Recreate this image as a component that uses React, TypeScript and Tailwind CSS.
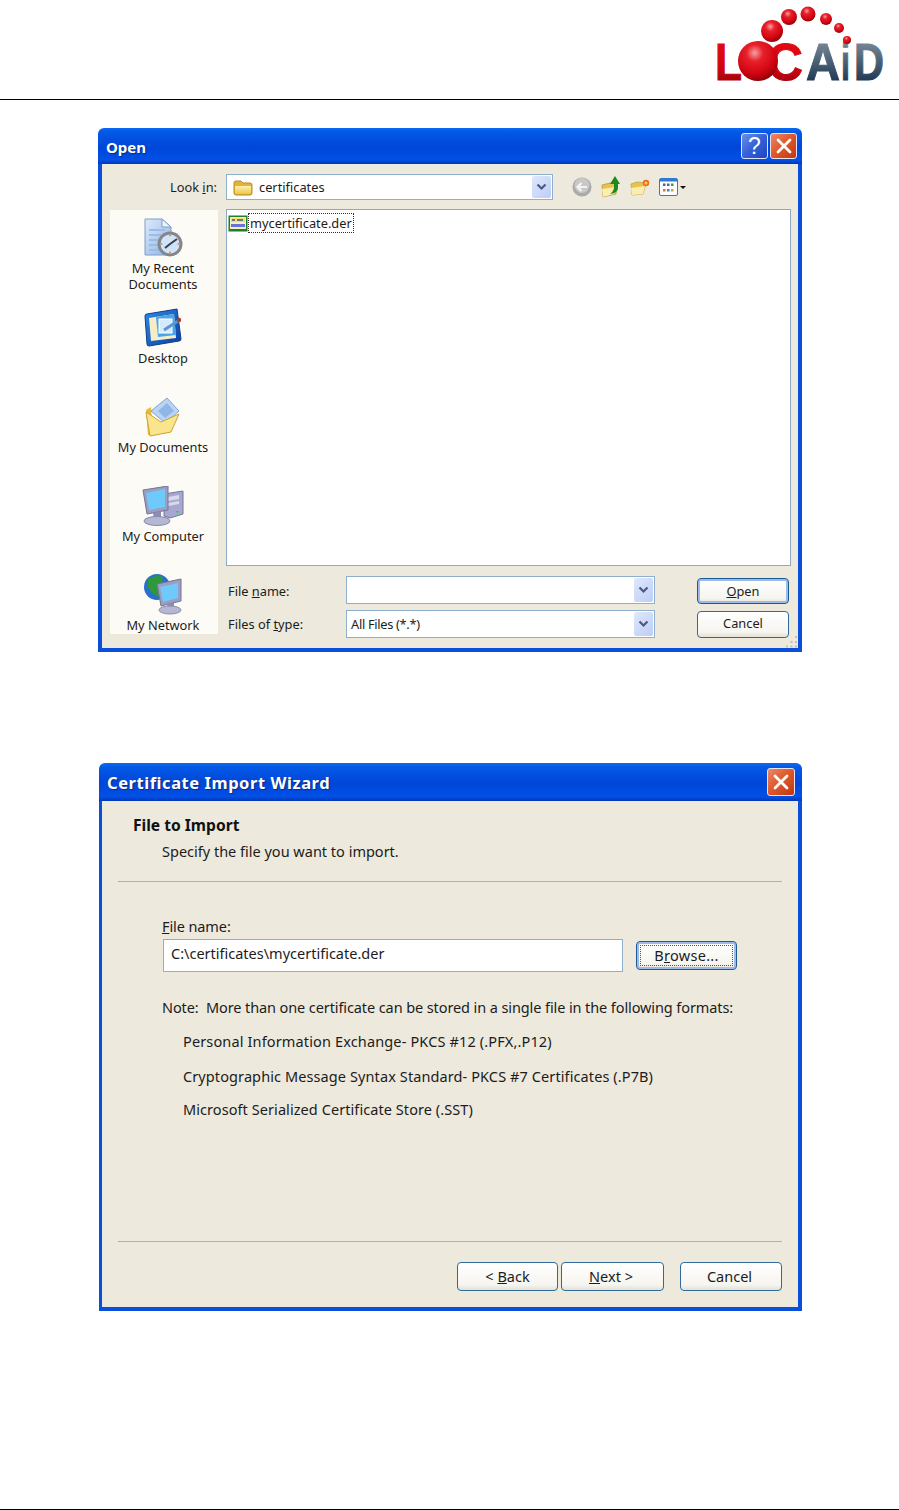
import type { ReactNode } from 'react'

const font = "font-['Noto_Sans','Liberation_Sans',sans-serif] text-[12.8px] leading-[20px] text-[#1c1c1c]"

function Logo() {
  return (
    <svg width="209" height="99" viewBox="690 0 209 99">
      <defs>
        <radialGradient id="ball" cx="0.42" cy="0.3" r="0.75">
          <stop offset="0" stopColor="#f6a0a0" />
          <stop offset="0.28" stopColor="#e8202a" />
          <stop offset="0.7" stopColor="#cf0410" />
          <stop offset="1" stopColor="#7d0208" />
        </radialGradient>
        <linearGradient id="red" x1="0" y1="0" x2="0" y2="1">
          <stop offset="0" stopColor="#ea0a14" />
          <stop offset="0.6" stopColor="#d00510" />
          <stop offset="1" stopColor="#8a0208" />
        </linearGradient>
        <linearGradient id="navy" x1="0" y1="0" x2="0" y2="1">
          <stop offset="0" stopColor="#8d9aa6" />
          <stop offset="0.5" stopColor="#4a5f74" />
          <stop offset="1" stopColor="#0c2545" />
        </linearGradient>
      </defs>
      <g fontFamily="'Liberation Sans',sans-serif" fontWeight="700" fontSize="52" strokeWidth="1">
        <text x="715" y="80" fill="url(#red)" stroke="url(#red)" textLength="27" lengthAdjust="spacingAndGlyphs">L</text>
        <text x="767" y="80" fill="url(#red)" stroke="url(#red)" textLength="36" lengthAdjust="spacingAndGlyphs">C</text>
        <text x="806" y="80" fill="url(#navy)" stroke="url(#navy)" textLength="34" lengthAdjust="spacingAndGlyphs">A</text>
        <text x="841" y="80" fill="url(#navy)" stroke="url(#navy)" textLength="9" lengthAdjust="spacingAndGlyphs">i</text>
        <text x="854" y="80" fill="url(#navy)" stroke="url(#navy)" textLength="30" lengthAdjust="spacingAndGlyphs">D</text>
      </g>
      <circle cx="758" cy="61" r="20" fill="url(#ball)" />
      <circle cx="772" cy="31" r="11" fill="url(#ball)" />
      <circle cx="789" cy="17" r="8" fill="url(#ball)" />
      <circle cx="808" cy="14" r="7.5" fill="url(#ball)" />
      <circle cx="826" cy="19" r="6" fill="url(#ball)" />
      <circle cx="839" cy="28" r="5" fill="url(#ball)" />
      <circle cx="847" cy="40" r="4" fill="url(#ball)" />
    </svg>
  )
}

function CloseBtn({ size }: { size: string }) {
  return (
    <div className={`${size} rounded-[3px] border border-[#e8e4f0] bg-[linear-gradient(135deg,#ea8a6a,#df5a2c_45%,#c2360f)] flex items-center justify-center`}>
      <svg width="18" height="18" viewBox="0 0 18 18">
        <path d="M3 3 15 15M15 3 3 15" stroke="#fff" strokeWidth="2.8" strokeLinecap="round" />
      </svg>
    </div>
  )
}

function HelpBtn() {
  return (
    <div className="w-[27px] h-[26px] rounded-[3px] border border-[#dfe6f8] bg-[linear-gradient(135deg,#6d8fe8,#3560d8_50%,#1f45c0)] flex items-center justify-center font-['Liberation_Sans',sans-serif] text-[23px] text-white">
      ?
    </div>
  )
}

function TitleBar({ title, height, titleClass, children }: { title: string; height: string; titleClass: string; children: ReactNode }) {
  return (
    <div className={`${height} rounded-t-[6px] flex items-center justify-between pl-[8px] bg-[linear-gradient(180deg,#0a6af0_0%,#0458e6_12%,#0046d8_55%,#0250e6_88%,#0038b8_100%)]`}>
      <span className={`${titleClass} font-['Noto_Sans',sans-serif] font-bold text-white [text-shadow:1px_1px_1px_#0a2a80]`}>{title}</span>
      <div className="flex gap-[2px]">{children}</div>
    </div>
  )
}

function XpButton({ label, width, height, variant }: { label: ReactNode; width: string; height: string; variant?: 'default' | 'focus' }) {
  const edge = variant ? 'border-[#1c5a96] shadow-[inset_0_0_0_2px_#9dbbe6]' : 'border-[#2f6a98]'
  return (
    <div className={`${width} ${height} rounded-[4px] border ${edge} bg-[linear-gradient(180deg,#ffffff,#f6f5ef_80%,#e4e1d6)] flex items-center justify-center`}>
      {variant === 'focus' ? (
        <div className="m-[3px] w-full h-[calc(100%-6px)] border border-dotted border-[#555] flex items-center justify-center">{label}</div>
      ) : (
        label
      )}
    </div>
  )
}

function DropArrow() {
  return (
    <div className="w-[19px] h-[calc(100%-2px)] mr-px rounded-[2px] bg-[linear-gradient(135deg,#dfe8fb,#bccdf6)] flex items-center justify-center">
      <svg width="11" height="8" viewBox="0 0 11 8">
        <path d="M1.5 1.5 5.5 5.5 9.5 1.5" fill="none" stroke="#4a5a80" strokeWidth="2.2" />
      </svg>
    </div>
  )
}

function FolderIcon() {
  return (
    <svg width="20" height="17" viewBox="0 0 20 17">
      <defs>
        <linearGradient id="fold" x1="0" y1="0" x2="0" y2="1">
          <stop offset="0" stopColor="#fdf0b0" />
          <stop offset="1" stopColor="#f2c548" />
        </linearGradient>
      </defs>
      <path d="M1 4Q1 2 3 2H8L10 4H17Q19 4 19 6V14Q19 16 17 16H3Q1 16 1 14Z" fill="#e3b23c" stroke="#b98e22" />
      <path d="M2 7H18V14Q18 15 17 15H3Q2 15 2 14Z" fill="url(#fold)" />
    </svg>
  )
}

function BackIcon() {
  return (
    <svg width="20" height="20" viewBox="0 0 20 20">
      <circle cx="10" cy="10" r="9.5" fill="#aaa" />
      <circle cx="10" cy="8.5" r="7.5" fill="#c8c8c8" />
      <path d="M15 10H6M9.5 6 5.5 10 9.5 14" fill="none" stroke="#f4f4f4" strokeWidth="2.2" />
    </svg>
  )
}

function UpFolderIcon() {
  return (
    <svg width="20" height="22" viewBox="0 0 20 22">
      <path d="M1 9 9 7 16 8 15 18 2 21Z" fill="#e9c24e" stroke="#b59a3e" strokeWidth="0.8" />
      <path d="M1 13 14 11 13 18 2 21Z" fill="#fbeeb0" />
      <path d="M9 18Q13 15 13 11V8H9L14 0 19 8H17V12Q17 17 9 18Z" fill="#1d8a1f" />
    </svg>
  )
}

function NewFolderIcon() {
  return (
    <svg width="20" height="18" viewBox="0 0 20 18">
      <path d="M1 6 7 4 16 5 13 16 2 17Z" fill="#e9c24e" stroke="#c4a548" strokeWidth="0.8" />
      <path d="M1 10 15 8 13 16 2 17Z" fill="#fbeeb0" />
      <circle cx="16" cy="5" r="3.200" fill="#ee6a22" />
      <circle cx="16" cy="5" r="1.500" fill="#ffd24a" />
    </svg>
  )
}

function ViewsIcon() {
  return (
    <svg width="30" height="18" viewBox="0 0 30 18">
      <rect x="0.5" y="0.5" width="18" height="17" rx="1.5" fill="#fff" stroke="#2f7ad0" />
      <rect x="1" y="1" width="17" height="2.5" fill="#2f7ad0" />
      <rect x="4" y="5.5" width="2.5" height="2.5" fill="#49659c" />
      <rect x="8" y="5.5" width="2.5" height="2.5" fill="#49659c" />
      <rect x="12" y="5.5" width="2.5" height="2.5" fill="#3c9a4c" />
      <rect x="4" y="11" width="2.5" height="2.5" fill="#d8763c" />
      <rect x="8" y="11" width="2.5" height="2.5" fill="#3f7fd0" />
      <rect x="12" y="11" width="2.5" height="2.5" fill="#d8a03c" />
      <path d="M21 8H27L24 11Z" fill="#111" />
    </svg>
  )
}

function CertIcon() {
  return (
    <svg width="20" height="17" viewBox="0 0 20 17">
      <rect x="0.5" y="0.5" width="19" height="16" fill="#1f7f2c" />
      <rect x="2" y="2" width="16" height="12" fill="#f5f0c4" />
      <rect x="3" y="3" width="14" height="4" fill="#f4dd6a" />
      <path d="M4 5H7M9 5H15" stroke="#3a5a90" strokeWidth="1.4" />
      <rect x="3" y="9" width="14" height="3" fill="#6a74d8" />
    </svg>
  )
}

function RecentIcon() {
  return (
    <svg width="40" height="40" viewBox="0 0 40 40">
      <defs>
        <linearGradient id="doc" x1="0" y1="0" x2="1" y2="1">
          <stop offset="0" stopColor="#dcebfb" />
          <stop offset="1" stopColor="#8fb2e4" />
        </linearGradient>
      </defs>
      <path d="M2 1H19L28 9V37H2Z" fill="url(#doc)" stroke="#7f9ccb" />
      <path d="M19 1V9H28Z" fill="#eef5ff" stroke="#7f9ccb" />
      <path d="M6 12H22M6 17H18M6 22H16M6 27H15M6 32H16" stroke="#9cbce6" strokeWidth="2" />
      <circle cx="27" cy="26" r="12.5" fill="#85858c" />
      <circle cx="27" cy="26" r="9.5" fill="#cfe4f8" />
      <path d="M27 26 34 21M27 26 22 30" stroke="#3a3f4a" strokeWidth="2" />
      <circle cx="27" cy="17.5" r="1" fill="#e08a5a" />
      <circle cx="35.5" cy="26" r="1" fill="#e08a5a" />
      <circle cx="27" cy="34.5" r="1" fill="#e08a5a" />
      <circle cx="18.5" cy="26" r="1" fill="#e08a5a" />
    </svg>
  )
}

function DesktopIcon() {
  return (
    <svg width="40" height="40" viewBox="0 0 40 40">
      <defs>
        <linearGradient id="desk" x1="0" y1="0" x2="1" y2="1">
          <stop offset="0" stopColor="#2f8ae6" />
          <stop offset="1" stopColor="#0a3f9e" />
        </linearGradient>
      </defs>
      <path d="M2 8Q2 6 4 6L34 1 38 31Q38 33 36 33L6 38Q4 38 4 36Z" fill="url(#desk)" stroke="#0c3f8e" />
      <path d="M6 10 31 6 33 30 8 33Z" fill="#f6edc8" />
      <path d="M13 9 31 6 33 27 15 29Z" fill="#4aa4ec" />
      <rect x="16" y="11" width="13" height="14" fill="#d5eafa" stroke="#fff" />
      <path d="M21 22 35 13" stroke="#5d93d2" strokeWidth="3" />
      <circle cx="36" cy="12" r="2.2" fill="#b33a22" />
    </svg>
  )
}

function DocumentsIcon() {
  return (
    <svg width="40" height="40" viewBox="0 0 40 40">
      <path d="M3 13 8 10 10 38 5 38Z" fill="#e8b93e" />
      <path d="M8 14 24 1 36 14 22 26Z" fill="#b9d4f4" stroke="#7ea6d8" />
      <path d="M15 14 24 6 31 14 22 21Z" fill="#8fb6e6" />
      <path d="M3 15 18 25 36 17 28 35 7 39Z" fill="#fbe48e" stroke="#cda232" />
    </svg>
  )
}

function ComputerIcon() {
  return (
    <svg width="42" height="40" viewBox="0 0 42 40">
      <path d="M22 8 41 5V28L28 32 22 30Z" fill="#a6a8cf" stroke="#74769e" />
      <path d="M26 11 37 9V13L26 15ZM26 17 37 15V18L26 20Z" fill="#d8d9ec" />
      <rect x="34" y="25" width="3" height="1.5" fill="#4fc04f" />
      <path d="M1 4 26 0V24L5 28Z" fill="#9c9dc0" stroke="#72749a" />
      <path d="M4 7 23 3V21L7 24Z" fill="#6dcafa" />
      <path d="M11 27 19 25V31L12 33Z" fill="#8a8cb0" />
      <ellipse cx="15" cy="35" rx="13" ry="4.5" fill="#b6b7d2" stroke="#8a8cb0" />
    </svg>
  )
}

function NetworkIcon() {
  return (
    <svg width="40" height="42" viewBox="0 0 40 42">
      <circle cx="14" cy="14" r="13" fill="#2a70c8" />
      <path d="M5 6Q14 1 20 4L18 12 22 18 16 24 9 20 5 14Z" fill="#2c9a3c" />
      <path d="M14 11 38 6V28L18 33Z" fill="#9c9dc0" stroke="#72749a" />
      <path d="M17 14 35 10V25L20 29Z" fill="#6dcafa" />
      <path d="M24 31 31 29V35L25 37Z" fill="#8a8cb0" />
      <ellipse cx="27" cy="37" rx="11" ry="4" fill="#b6b7d2" stroke="#8a8cb0" />
    </svg>
  )
}

function GripIcon() {
  return (
    <svg width="13" height="13" viewBox="0 0 13 13" className="absolute right-0 bottom-0">
      <path d="M10 1h2v2h-2zM5.500 6h2v2h-2zM10 6h2v2h-2zM1 10.500h2v2H1zM5.500 10.500h2v2h-2zM10 10.500h2v2h-2z" fill="#c4c1b2" />
    </svg>
  )
}

function Place({ icon, label, className }: { icon: ReactNode; label: ReactNode; className: string }) {
  return (
    <div className={`${className} flex flex-col items-center text-center leading-[16px] pr-[2px]`}>
      {icon}
      <div className="mt-[2px] whitespace-nowrap">{label}</div>
    </div>
  )
}

function OpenDialog() {
  return (
    <div className="ml-[98px] mt-[28px] w-[704px]">
      <TitleBar title="Open" height="h-[36px] pr-[5px]" titleClass="text-[15px] pt-[2px]">
        <HelpBtn />
        <CloseBtn size="w-[27px] h-[26px]" />
      </TitleBar>
      <div className="relative h-[488px] border-x-4 border-b-4 border-[#0a4fdc] bg-[#ede9dd] pl-[8px] pt-[10px]">
        <GripIcon />
        <div className="flex items-center h-[26px]">
          <div className="w-[107px] text-right">Look <span className="underline">i</span>n:</div>
          <div className="ml-[9px] w-[327px] h-full border border-[#8fb0cc] bg-white flex items-center justify-between pl-[6px]">
            <div className="flex items-center gap-[6px]">
              <FolderIcon />
              <span>certificates</span>
            </div>
            <DropArrow />
          </div>
          <div className="ml-[19px] flex items-center gap-[9px]">
            <BackIcon />
            <UpFolderIcon />
            <NewFolderIcon />
            <ViewsIcon />
          </div>
        </div>
        <div className="flex mt-[9px]">
          <div className="w-[108px] h-[424px] mt-px bg-[#fdfbf6] overflow-hidden">
            <Place className="h-[90px] pt-[8px]" icon={<RecentIcon />} label={<>My Recent<br />Documents</>} />
            <Place className="h-[89px] pt-[8px]" icon={<DesktopIcon />} label="Desktop" />
            <Place className="h-[89px] pt-[8px]" icon={<DocumentsIcon />} label="My Documents" />
            <Place className="h-[89px] pt-[8px]" icon={<ComputerIcon />} label="My Computer" />
            <Place className="h-[67px] pt-[6px]" icon={<NetworkIcon />} label="My Network" />
          </div>
          <div className="ml-[8px] w-[565px]">
            <div className="h-[357px] border border-[#8fa9c4] bg-white py-[3px] pl-px">
              <div className="flex items-center">
                <CertIcon />
                <span className="h-[20px] border border-dotted border-[#333] px-px leading-[18px]">mycertificate.der</span>
              </div>
            </div>
            <div className="mt-[10px] flex items-center h-[28px]">
              <div className="w-[120px] pl-[2px] pt-px">File <span className="underline">n</span>ame:</div>
              <div className="w-[309px] h-full border border-[#8fb0cc] bg-white flex justify-end items-center"><DropArrow /></div>
              <div className="ml-[42px] mt-[2px]">
                <XpButton width="w-[92px]" height="h-[26px]" variant="default" label={<><span className="underline">O</span>pen</>} />
              </div>
            </div>
            <div className="mt-[6px] flex items-center h-[28px]">
              <div className="w-[120px] pl-[2px]">Files of <span className="underline">t</span>ype:</div>
              <div className="w-[309px] h-full border border-[#8fb0cc] bg-white flex justify-between items-center pl-[4px]">
                <span className="tracking-[-0.3px]">All Files (*.*)</span>
                <DropArrow />
              </div>
              <div className="ml-[42px]">
                <XpButton width="w-[92px]" height="h-[27px]" label={<span className="mb-[2px]">Cancel</span>} />
              </div>
            </div>
          </div>
        </div>
      </div>
    </div>
  )
}

function WizardDialog() {
  return (
    <div className="ml-[99px] mt-[111px] w-[703px]">
      <TitleBar title="Certificate Import Wizard" height="h-[38px] pr-[7px]" titleClass="text-[16.5px] tracking-[0.55px] pt-px">
        <CloseBtn size="w-[28px] h-[28px]" />
      </TitleBar>
      <div className="h-[510px] border-l-[3px] border-r-4 border-b-4 border-[#0a4fdc] bg-[#ede9dd] text-[14.5px]">
        <div className="pt-[14px] pl-[31px] text-[15.6px] font-bold text-[#111]">File to Import</div>
        <div className="mt-[6px] pl-[60px]">Specify the file you want to import.</div>
        <div className="mt-[20px] mx-[16px] h-px bg-[#b5b2a4]" />
        <div className="mt-[34px] pl-[60px] tracking-[-0.1px]"><span className="underline">F</span>ile name:</div>
        <div className="mt-[3px] ml-[61px] flex items-center">
          <div className="w-[460px] h-[33px] border border-[#8fb0cc] bg-white pl-[7px] leading-[27px]">C:\certificates\mycertificate.der</div>
          <div className="ml-[13px]">
            <XpButton width="w-[101px]" height="h-[29px]" variant="focus" label={<span className="mb-[2px] tracking-[0.3px]">B<span className="underline">r</span>owse...</span>} />
          </div>
        </div>
        <div className="mt-[25px] pl-[60px] tracking-[-0.1px]">Note:&nbsp; More than one certificate can be stored in a single file in the following formats:</div>
        <div className="mt-[14px] pl-[81px] tracking-[0.14px]">Personal Information Exchange- PKCS #12 (.PFX,.P12)</div>
        <div className="mt-[15px] pl-[81px] tracking-[0.1px]">Cryptographic Message Syntax Standard- PKCS #7 Certificates (.P7B)</div>
        <div className="mt-[13px] pl-[81px] tracking-[0.07px]">Microsoft Serialized Certificate Store (.SST)</div>
        <div className="mt-[122px] mx-[16px] h-px bg-[#b5b2a4]" />
        <div className="mt-[20px] flex justify-end pr-[16px]">
          <XpButton width="w-[101px]" height="h-[29px]" label={<span className="mb-[2px]">&lt;&nbsp;<span className="underline">B</span>ack</span>} />
          <div className="ml-[3px]">
            <XpButton width="w-[103px]" height="h-[29px]" label={<span className="mb-[2px] mr-[3px]"><span className="underline">N</span>ext &gt;</span>} />
          </div>
          <div className="ml-[16px]">
            <XpButton width="w-[102px]" height="h-[29px]" label={<span className="mb-[2px] mr-[3px]">Cancel</span>} />
          </div>
        </div>
      </div>
    </div>
  )
}

export default function App() {
  return (
    <div className={`${font} w-[899px] h-[1510px] bg-white overflow-hidden`}>
      <div className="h-[100px] border-b border-black flex justify-end">
        <Logo />
      </div>
      <OpenDialog />
      <WizardDialog />
      <div className="mt-[198px] border-t border-black" />
    </div>
  )
}
